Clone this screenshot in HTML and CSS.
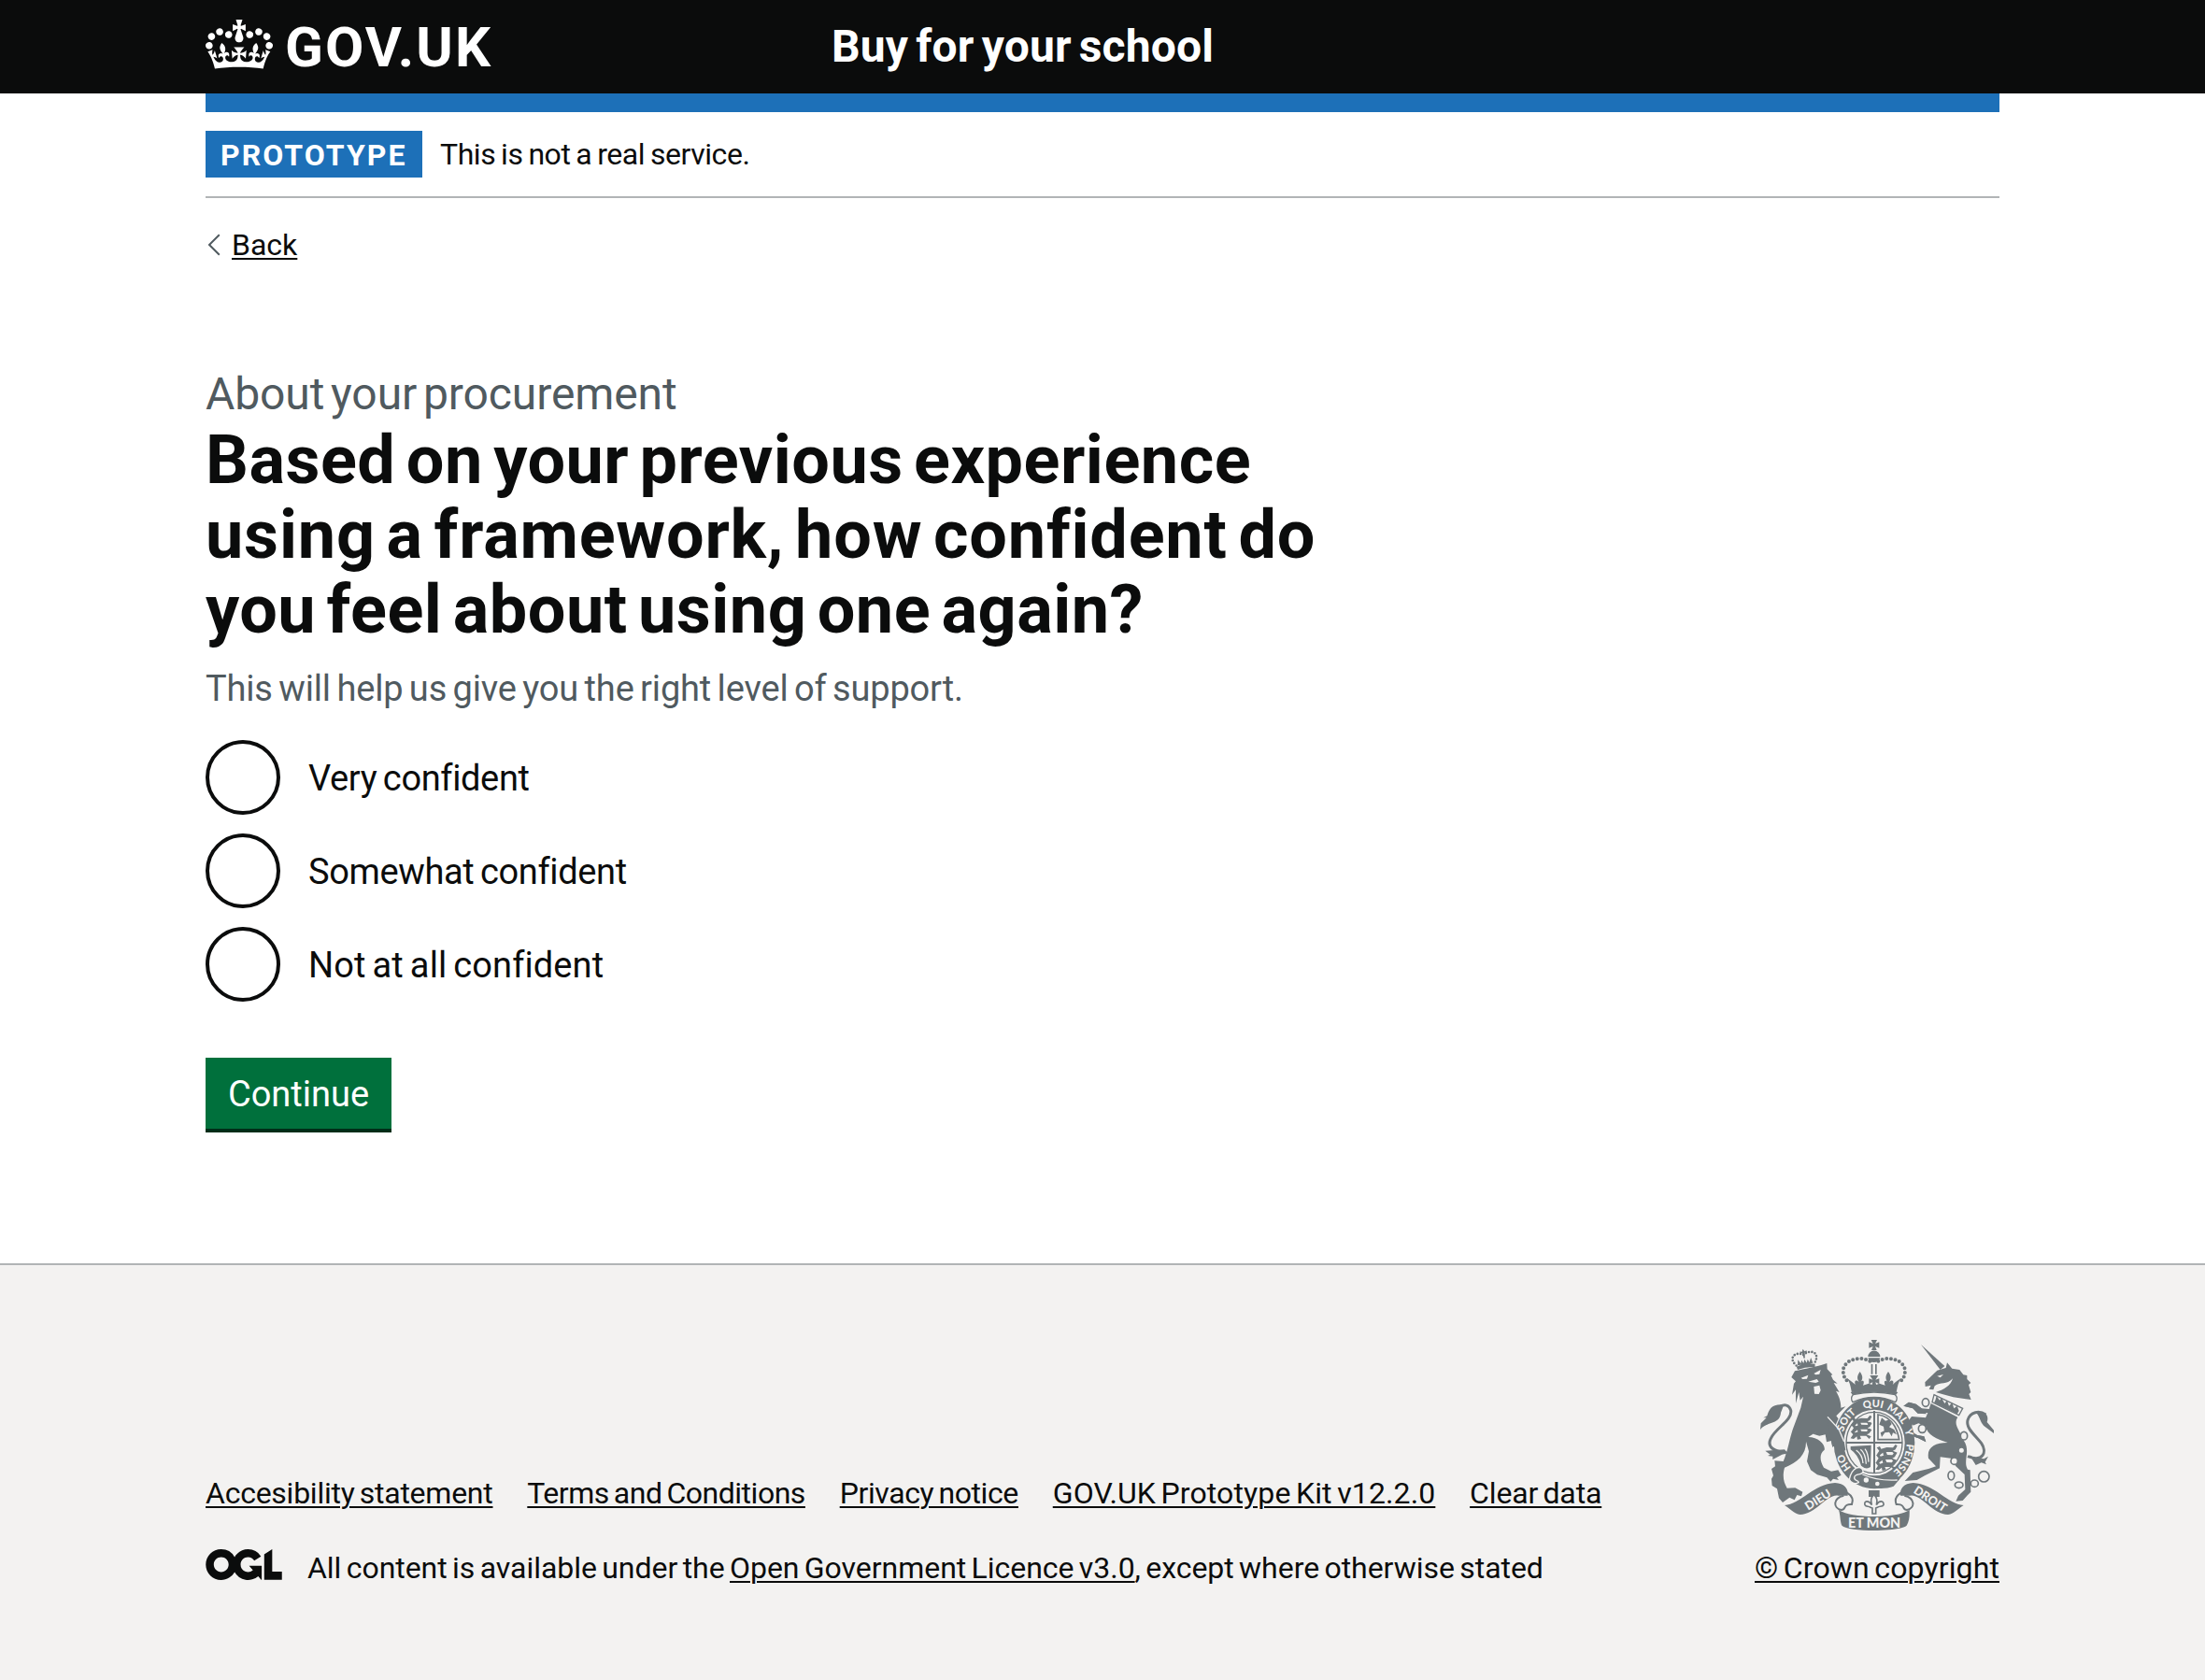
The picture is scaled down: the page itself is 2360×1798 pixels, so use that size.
FILE: index.html
```html
<!DOCTYPE html>
<html lang="en">
<head>
<meta charset="utf-8">
<title>Buy for your school</title>
<link rel="stylesheet" href="styles.css">
</head>
<body>
<header class="header">
  <div class="container header-row">
    <a class="logo" href="#">
      <svg class="logo-crown" viewBox="0 0 132 97" aria-hidden="true"><path fill="currentColor" fill-rule="evenodd" d="M25 30.2c3.5 1.5 7.7-.2 9.1-3.7 1.5-3.6-.2-7.8-3.9-9.2-3.6-1.4-7.6.3-9.1 3.9-1.4 3.5.3 7.5 3.9 9zM9 39.5c3.6 1.5 7.8-.2 9.2-3.7 1.5-3.6-.2-7.8-3.9-9.1-3.6-1.5-7.6.2-9.1 3.8-1.4 3.5.3 7.5 3.8 9zM4.4 57.2c3.5 1.5 7.7-.2 9.1-3.8 1.5-3.6-.2-7.7-3.9-9.1-3.5-1.5-7.6.3-9.1 3.8-1.4 3.5.3 7.6 3.9 9.1zm38.3-21.4c3.5 1.5 7.7-.2 9.1-3.8 1.5-3.6-.2-7.7-3.9-9.1-3.6-1.5-7.6.3-9.1 3.8-1.3 3.6.4 7.7 3.9 9.1zm64.4-5.6c-3.6 1.5-7.8-.2-9.1-3.7-1.5-3.6.2-7.8 3.8-9.2 3.6-1.4 7.7.3 9.2 3.9 1.3 3.5-.4 7.5-3.9 9zm15.9 9.3c-3.6 1.5-7.7-.2-9.1-3.7-1.5-3.6.2-7.8 3.7-9.1 3.6-1.5 7.7.2 9.2 3.8 1.5 3.5-.3 7.5-3.8 9zm4.7 17.7c-3.6 1.5-7.8-.2-9.2-3.8-1.5-3.6.2-7.7 3.9-9.1 3.6-1.5 7.7.3 9.2 3.8 1.3 3.5-.4 7.6-3.9 9.1zM89.3 35.8c-3.6 1.5-7.8-.2-9.2-3.8-1.4-3.6.2-7.7 3.9-9.1 3.6-1.5 7.7.3 9.2 3.8 1.4 3.6-.3 7.7-3.9 9.1zM69.7 17.7l8.9 4.7V9.3l-8.9 2.8c-.2-.3-.5-.6-.9-.9L72.4 0H59.6l3.5 11.2c-.3.3-.6.5-.9.9l-8.8-2.8v13.1l8.8-4.7c.3.3.6.7.9.9l-5 15.4v.1c-.2.8-.4 1.6-.4 2.4 0 4.1 3.1 7.5 7 8.1h.2c.3 0 .7.1 1 .1.4 0 .7 0 1-.1h.2c4-.6 7.1-4.1 7.1-8.1 0-.8-.1-1.7-.4-2.4V34l-5.1-15.4c.4-.2.7-.6 1-.9zM66 92.8c16.9 0 32.8 1.1 47.1 3.2 4-16.9 8.9-26.7 14-33.5l-9.6-3.4c1 4.9 1.1 7.2 0 10.2-1.5-1.4-3-4.3-4.2-8.7L108.6 76c2.8-2 5-3.2 7.5-3.3-4.4 9.4-10 11.9-13.6 11.2-4.3-.8-6.3-4.6-5.6-7.9 1-4.7 5.7-5.9 8-.5 4.3-8.7-3-11.4-7.6-8.8 7.1-7.2 7.9-13.5 2.1-21.1-8 6.1-8.1 12.3-4.5 20.8-4.7-5.4-12.1-2.5-9.5 6.2 3.4-5.2 7.9-2 7.2 3.1-.6 4.3-6.4 7.8-13.5 7.2-10.3-.9-10.9-8-11.2-13.8 2.5-.5 7.1 1.8 11 7.3L80.2 60c-4.1 4.4-8 5.3-12.3 5.4 1.4-4.4 8-11.6 8-11.6H55.5s6.4 7.2 7.9 11.6c-4.2-.1-8-1-12.3-5.4l1.4 16.4c3.9-5.5 8.5-7.7 10.9-7.3-.3 5.8-.9 12.8-11.1 13.8-7.2.6-12.9-2.9-13.5-7.2-.7-5 3.8-8.3 7.1-3.1 2.7-8.7-4.6-11.6-9.4-6.2 3.7-8.5 3.6-14.7-4.6-20.8-5.8 7.6-5 13.9 2.2 21.1-4.7-2.6-11.9.1-7.7 8.8 2.3-5.5 7.1-4.2 8.1.5.7 3.3-1.3 7.1-5.7 7.9-3.5.7-9-1.8-13.5-11.2 2.5.1 4.7 1.3 7.5 3.3l-4.7-15.4c-1.2 4.4-2.7 7.2-4.3 8.7-1.1-3-.9-5.3 0-10.2l-9.5 3.4c5 6.9 9.9 16.7 14 33.5 14.8-2.1 30.8-3.2 47.7-3.2z"/></svg>
      <span class="logo-text">GOV.UK</span>
    </a>
    <a class="service-name" href="#">Buy for your school</a>
  </div>
</header>
<div class="container page">
  <div class="accent-bar"></div>
  <div class="phase-banner">
    <strong class="tag">PROTOTYPE</strong>
    <span class="phase-text">This is not a real service.</span>
  </div>
  <a class="back-link" href="#">
    <svg class="back-chevron" viewBox="0 0 14 24" aria-hidden="true"><path d="M12.8 1.2 2 12l10.8 10.8" fill="none" stroke="#505a5f" stroke-width="2"/></svg>
    <span class="back-text">Back</span>
  </a>
  <main class="main">
    <span class="caption">About your procurement</span>
    <h1 class="heading"><span class="line">Based on your previous experience</span> <span class="line line-wide">using a framework, how confident do</span> <span class="line">you feel about using one again?</span></h1>
    <div class="hint">This will help us give you the right level of support.</div>
    <div class="radios">
      <label class="radio"><input type="radio" name="confidence" class="radio-input"><span class="radio-text">Very confident</span></label>
      <label class="radio"><input type="radio" name="confidence" class="radio-input"><span class="radio-text">Somewhat confident</span></label>
      <label class="radio"><input type="radio" name="confidence" class="radio-input"><span class="radio-text radio-text-wide">Not at all confident</span></label>
    </div>
    <button class="button" type="button">Continue</button>
  </main>
</div>
<footer class="footer">
  <div class="container footer-row">
    <div class="footer-meta">
      <nav class="footer-links">
        <a class="link-accessibility" href="#">Accesibility statement</a>
        <a class="link-terms" href="#">Terms and Conditions</a>
        <a class="link-privacy" href="#">Privacy notice</a>
        <a class="link-kit" href="#">GOV.UK Prototype Kit v12.2.0</a>
        <a class="link-clear" href="#">Clear data</a>
      </nav>
      <div class="licence">
        <svg class="ogl" viewBox="0 0 483.2 195.7" aria-hidden="true"><path fill="currentColor" d="M421.5 142.8V.1l-50.7 32.3v161.1h112.4v-50.7zm-122.3-9.6A47.12 47.12 0 0 1 221 97.8c0-26 21.1-47.1 47.1-47.1 16.7 0 31.4 8.7 39.7 21.8l42.7-27.2A97.63 97.63 0 0 0 268.1 0c-36.5 0-68.3 20.1-85.1 49.7A98 98 0 0 0 97.8 0C43.9 0 0 43.9 0 97.8s43.9 97.8 97.8 97.8c36.5 0 68.3-20.1 85.1-49.7a97.76 97.76 0 0 0 149.6 25.4l19.4 22.2h3v-87.8h-80l24.3 27.5zM97.8 145c-26 0-47.1-21.1-47.1-47.1s21.1-47.1 47.1-47.1 47.1 21.1 47.1 47.1S123.8 145 97.8 145"/></svg>
        <span class="licence-text">All content is available under the <a href="#">Open Government Licence v3.0</a>, except where otherwise stated</span>
      </div>
    </div>
    <div class="copyright">
      <svg class="crest" viewBox="72 72 750 612" aria-hidden="true">
        <defs>
          <path id="garter" d="M438 516A104 114 0 0 1 438 288A104 114 0 0 1 438 516"/>
          <g id="ribbon-side">
            <path d="M150 603C200 600 245 534 312 531C342 532 356 550 353 572L322 572C285 566 250 633 200 633C180 630 166 612 150 603Z"/>
            <path d="M340 572C305 580 305 612 332 618C350 618 335 598 366 600C372 586 366 572 350 562" fill="none" stroke="#6f777b" stroke-width="6"/>
          </g>
          <g id="crown-half">
            <path d="M424 140C395 124 345 132 338 168C338 190 346 200 356 208" fill="none" stroke="#6f777b" stroke-width="12" stroke-linecap="round" stroke-dasharray="0 14"/>
            <path d="M392 174C380 190 384 200 390 208C378 196 372 206 378 216C364 204 356 198 350 194C362 212 362 224 366 240C390 234 414 230 438 230L438 218L420 212L402 218C408 206 402 198 394 208C400 200 404 190 392 174Z"/>
          </g>
          <path id="lion" d="M0 4L10 0L14 8L32 3L52 4L60-6L66-2L60 10L52 14L66 20L60 28L50 18L30 18L34 28L22 30L20 20L10 28L0 26L8 14Z"/>
        </defs>
        <g fill="#6f777b">
          <g transform="rotate(-9 215 140)">
            <path d="M186 154Q215 144 246 154L244 164Q215 158 188 164ZM215 101l4 8 7-2v8l-7-2-2 18h-4l-2-18-7 2v-8l7 2ZM190 150l4-18 7 14 4-10 5 10 5-12 5 12 5-10 4 10 7-14 4 18Z"/>
            <path d="M186 150C160 118 196 104 213 120C236 104 270 118 246 150" fill="none" stroke="#6f777b" stroke-width="8" stroke-linecap="round" stroke-dasharray="0 10"/>
          </g>
          <path d="M172 192L183 172C215 164 250 160 286 147L287 166L304 184L299 186L306 200L320 212L308 210L326 240L315 236C328 258 331 275 331 290L346 286L316 316L338 346L350 390L346 426L336 431L330 416L322 430L312 412L304 416L300 396L285 400L281 376L262 380L242 374L258 364L226 384C260 384 282 410 278 425C260 438 264 462 276 482L300 494L322 490L332 506L318 514L324 522L306 518L298 527L286 514L255 505L234 490L222 462L228 430L219 398C220 440 192 465 150 482C142 512 148 530 158 548L184 547L208 560L204 574L190 570L182 586L166 578L144 594L132 580L126 550L110 540L108 518L114 508L108 486L120 478L118 460L146 462C160 430 166 390 176 360L202 290L210 254L200 266L196 240L186 276L186 232L174 248L180 212L186 205Z"/>
          <path d="M155 434C115 430 92 416 106 388C122 354 176 330 170 298C165 280 150 278 136 286" fill="none" stroke="#6f777b" stroke-width="9"/>
          <path d="M148 280C110 276 100 294 94 316L82 322L92 322L74 340L72 360C94 332 134 346 138 306ZM88 428L104 440L96 444L112 446L112 456L142 440L160 436L150 424L118 426Z"/>
          <path fill="#f3f2f1" d="M203 194L226 185L222 197L208 198ZM244 180L266 168L262 182L250 184ZM226 206L254 198L260 206L250 210ZM244 222L262 218L266 234L260 246L246 245Z"/>

          <path d="M588 87L664 156L650 168Z"/>
          <path d="M601 208L640 170L668 162L672 145L688 164L712 168L724 184L736 186L736 198L748 210L741 216L748 240L742 246L749 264L732 262L692 256L656 246L636 240C660 232 684 220 690 196C670 218 652 206 632 220L628 232L614 230L620 218L602 222Z"/>
          <path fill="#f3f2f1" d="M640 188L660 183L650 193Z"/>
          <path d="M630 248L722 292L710 314L624 272Z" fill="none" stroke="#6f777b" stroke-width="4"/>
          <path d="M634 266L638 252L648 266L654 258L664 276L672 266L678 284L688 274L694 292L704 284L710 300L704 310L630 274Z"/>
          <path d="M620 276L706 320C690 344 714 364 726 396C748 430 722 462 738 488L746 490L748 560L736 572L722 588L700 590L708 572L730 552L728 504L700 478L684 452L650 448L648 484L600 508L575 522L536 525L562 498L612 486L636 478L612 452C606 418 632 402 674 402C640 390 606 376 604 350L580 340L560 348L556 364L576 378L598 382L604 400L580 388L544 378L538 338L560 320L602 324L610 306L578 308L562 292L532 284L548 272L572 278L590 292L614 294Z"/>
          <path d="M738 446C790 466 800 430 782 404C760 376 732 356 738 330C746 302 776 298 796 312" fill="none" stroke="#6f777b" stroke-width="9"/>
          <path d="M762 304C792 300 808 312 800 336L822 362L822 372L790 348C776 334 778 316 762 304ZM744 442L760 450L790 454L804 446L794 464L798 472L782 466L764 474Z"/>
          <g fill="#f3f2f1" stroke="#6f777b" stroke-width="5">
            <ellipse cx="603" cy="273" rx="11" ry="13"/><ellipse cx="592" cy="357" rx="12" ry="13"/><ellipse cx="726" cy="380" rx="11" ry="13"/><circle cx="718" cy="427" r="10"/><circle cx="695" cy="461" r="11"/><ellipse cx="685" cy="508" rx="10" ry="14"/><ellipse cx="710" cy="538" rx="13" ry="10"/><ellipse cx="760" cy="533" rx="12" ry="11"/><circle cx="790" cy="511" r="17"/>
          </g>

          <ellipse cx="438" cy="402" rx="134" ry="151" fill="#f3f2f1"/>
          <ellipse cx="438" cy="402" rx="130" ry="148"/>
          <ellipse cx="438" cy="402" rx="98" ry="106" fill="#f3f2f1"/>
          <ellipse cx="438" cy="402" rx="90" ry="98" fill="none" stroke="#6f777b" stroke-width="4"/>
          <path d="M435 300H441V500H435ZM348 399H528V405H348Z"/>
          <use href="#lion" x="364" y="320"/><use href="#lion" x="362" y="362"/><use href="#lion" x="364" y="341"/>
          <use href="#lion" x="446" y="414"/><use href="#lion" x="444" y="438"/><use href="#lion" x="442" y="462"/>
          <path d="M450 392V312Q505 320 518 392Z" fill="none" stroke="#6f777b" stroke-width="5"/>
          <path d="M462 322l12 10 12-4 8 14-8 10 16 8 8 16-12-6-4 12-8-14-14 2-10 14-4-14 12-6-2-14-14-6Z"/>
          <path d="M362 414L428 410L426 480Q412 490 396 476Q386 440 362 424Z"/>
          <path d="M380 426Q400 440 402 468M394 424Q410 436 412 470M408 422Q418 434 420 464" fill="none" stroke="#f3f2f1" stroke-width="4"/>
          <path d="M366 486C400 520 470 530 522 516L500 542C460 556 412 548 366 520Z"/>
          <path d="M358 520C366 480 396 472 402 492C404 510 376 498 374 514C374 528 388 520 388 530C376 536 362 532 358 520Z" stroke="#f3f2f1" stroke-width="4"/>
          <circle cx="412" cy="522" r="8" fill="#f3f2f1"/><circle cx="448" cy="534" r="7" fill="#f3f2f1"/>
          <path d="M400 504Q450 526 512 522" fill="none" stroke="#f3f2f1" stroke-width="4"/>
          <path d="M286 318L328 360L340 392L346 426L336 431L330 416L322 430L312 412L304 416L298 390Z"/>
          <path d="M288 319L324 358L341 398" fill="none" stroke="#f3f2f1" stroke-width="4"/>
          <path d="M532 284L550 272L572 278L590 292L606 310L578 308L562 292ZM604 346L580 336L560 344L554 364L576 378L598 382L604 400L580 388L552 378L544 338L558 318L604 322Z"/>
          <g class="motto">
            <text><textPath href="#garter" startOffset="16%">HO</textPath></text>
            <text><textPath href="#garter" startOffset="35.5%">SOIT</textPath></text>
            <text><textPath href="#garter" startOffset="49.5%">QUI</textPath></text>
            <text><textPath href="#garter" startOffset="61%">MAL</textPath></text>
            <text><textPath href="#garter" startOffset="70.5%">Y</textPath></text>
            <text><textPath href="#garter" startOffset="83%">PENSE</textPath></text>
          </g>

          <use href="#crown-half"/><use href="#crown-half" transform="matrix(-1 0 0 1 875 0)"/>
          <path d="M428 72H447L441 84L454 79V98L441 93L446 105H429L434 93L421 98V79L434 84ZM418 126A19 19 0 0 1 457 126ZM418 130H457Q452 144 437 144Q422 144 418 130ZM428 150H433V182H428ZM441 150H446V182H441ZM424 186H451L442 200L454 196V214L442 208L446 222H429L433 208L421 214V196L433 200Z"/>
          <path d="M362 240Q437 216 514 240L508 248Q437 230 368 248Z"/>
          <path d="M370 248Q437 232 505 248Q516 258 506 272Q437 240 369 272Q360 258 370 248Z" fill="#f3f2f1" stroke="#6f777b" stroke-width="4"/>

          <use href="#ribbon-side"/><use href="#ribbon-side" transform="matrix(-1 0 0 1 875 0)"/>
          <path d="M324 617C360 646 515 646 551 617C552 640 550 654 542 668C520 689 355 689 334 668C328 654 330 638 324 617Z"/>
          <path d="M420 555H455V576H420Z"/>
          <path d="M437 568C424 582 428 592 430 602C420 586 404 588 408 602C412 610 420 604 426 610L432 612V630H443V612L448 610C454 604 464 610 468 602C470 588 454 586 445 602C447 592 450 582 437 568Z" fill="#f3f2f1" stroke="#6f777b" stroke-width="5"/>
          <g class="motto">
            <text class="scroll" transform="translate(264 596) rotate(-32)">DIEU</text>
            <text class="scroll" transform="translate(611 594) rotate(33)">DROIT</text>
            <text class="mon" x="438" y="675">ET MON</text>
          </g>
        </g>
      </svg>
      <a class="link-copyright" href="#">© Crown copyright</a>
    </div>
  </div>
</footer>
</body>
</html>
```
FILE: styles.css
```css
* { box-sizing: border-box; }
body { margin: 0; min-height: 1798px; display: flex; flex-direction: column; background: #fff; color: #0b0c0c; font-family: Roboto, "Liberation Sans", sans-serif; font-size: 32px; line-height: 40px; white-space: nowrap; word-spacing: -2.5px; }
a { color: inherit; text-decoration-thickness: 2px; text-underline-offset: 3px; }
.container { width: 1920px; margin: 0 auto; }
.header { background: #0b0c0c; color: #fff; }
.header-row { display: flex; align-items: center; height: 100px; }
.logo { display: flex; align-items: center; width: 670px; text-decoration: none; }
.logo-crown { display: block; width: 72px; height: 53px; margin: 0 13px 5px 0; }
.logo-text { padding-top: 1px; font-size: 60px; line-height: 100px; font-weight: 700; letter-spacing: 2.1px; }
.service-name { font-size: 48px; line-height: 100px; font-weight: 700; text-decoration: none; letter-spacing: .16px; word-spacing: -4px; }
.accent-bar { height: 20px; background: #1d70b8; }
.phase-banner { display: flex; align-items: center; gap: 19px; padding: 20px 0; border-bottom: 2px solid #b1b4b6; }
.tag { display: flex; align-items: center; width: 232px; height: 50px; padding: 2px 0 0 16px; background: #1d70b8; color: #fff; font-weight: 700; letter-spacing: 2.05px; }
.phase-text { letter-spacing: -.45px; word-spacing: -1.6px; }
.back-link { display: flex; align-items: center; width: max-content; margin-top: 30px; text-decoration: none; }
.back-chevron { width: 14px; height: 24px; margin: 0 12px 0 2px; }
.back-text { text-decoration: underline; text-decoration-thickness: 2px; text-underline-offset: 3px; }
.main { margin-top: 110px; }
.caption { display: block; margin-bottom: 1px; font-size: 48px; line-height: 60px; color: #505a5f; letter-spacing: -.1px; word-spacing: -5px; }
.heading { margin: 0 0 19px; font-size: 72px; line-height: 80px; font-weight: 700; letter-spacing: .5px; word-spacing: -7px; }
.line { display: block; }
.line-wide { letter-spacing: .8px; }
.hint { font-size: 38px; line-height: 50px; color: #505a5f; margin-bottom: 30px; letter-spacing: -.16px; word-spacing: -2.8px; }
.radios { display: flex; flex-direction: column; gap: 20px; margin-bottom: 60px; }
.radio { display: flex; align-items: center; gap: 30px; height: 80px; font-size: 38px; line-height: 50px; }
.radio-text { padding-top: 2px; letter-spacing: -.36px; word-spacing: -2.5px; }
.radio-text-wide { letter-spacing: .1px; }
.radio-input { appearance: none; width: 80px; height: 80px; margin: 0; border: 4px solid #0b0c0c; border-radius: 50%; }
.button { display: block; width: 199px; height: 76px; padding: 2px 0 0; border: 0; background: #00703c; box-shadow: 0 4px 0 #002d18; color: #fff; font: 400 38px/50px Roboto, sans-serif; }
.footer { flex: 1; margin-top: 144px; padding-top: 80px; border-top: 2px solid #b1b4b6; background: #f3f2f1; }
.footer-row { display: flex; align-items: flex-end; justify-content: space-between; }
.footer-links { display: flex; gap: 36.8px; margin-bottom: 40px; }
.link-accessibility { letter-spacing: -.25px; }
.link-terms { letter-spacing: -.48px; }
.link-privacy { letter-spacing: -.39px; }
.link-kit { letter-spacing: .11px; }
.link-clear { letter-spacing: -.15px; }
.link-copyright { letter-spacing: .12px; }
.licence { display: flex; }
.ogl { width: 82px; height: 33px; margin-right: 27px; }
.licence-text { letter-spacing: -.04px; }
.copyright { display: flex; flex-direction: column; align-items: flex-end; }
.crest { display: block; width: 250px; height: 204px; margin: 0 6px 20px 0; }
.motto { fill: #f3f2f1; font: 900 33px Lato, sans-serif; text-anchor: middle; letter-spacing: 0; word-spacing: 0; }
.scroll { font-size: 38px; }
.mon { font-size: 43px; }
```
